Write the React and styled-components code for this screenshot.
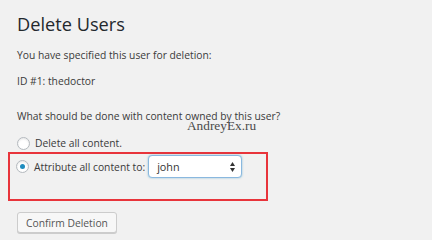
import React, { useState } from "react"
import styled, { createGlobalStyle } from "styled-components"

const GlobalStyle = createGlobalStyle`
    html, body {
        margin: 0;
        padding: 0;
        background: #f1f1f1;
    }
    body {
        font-family: "Open Sans", "Liberation Sans", sans-serif;
        color: #3a3a3a;
    }
`

const Page = styled.div`
    width: 432px;
    height: 240px;
    padding: 12px 0 0 17px;
    box-sizing: border-box;
    overflow: hidden;
`

const Title = styled.h1`
    margin: 0;
    font-size: 18.2px;
    font-weight: 400;
    line-height: 24px;
    color: #23282d;
`

const Text = styled.p`
    margin: ${ props => props.$top || 0 }px 0 0;
    font-size: 10.3px;
    line-height: 14px;
    color: #3a3a3a;
`

const Fieldset = styled.div`
    position: relative;
    margin-top: 21px;
`

const Watermark = styled.span`
    position: absolute;
    left: 170px;
    top: 10px;
    font-family: "Liberation Serif", "DejaVu Serif", serif;
    font-size: 13.3px;
    line-height: 14px;
    color: #4a4a4a;
`

const Row = styled.label`
    display: flex;
    align-items: center;
    gap: 5px;
    margin-top: ${ props => props.$top || 0 }px;
    height: ${ props => props.$height || 18 }px;
    font-size: 10.3px;
    line-height: 14px;
    color: #3a3a3a;
    white-space: nowrap;
`

const Highlight = styled.div`
    margin-left: -9px;
    width: 260px;
    height: 49px;
    box-sizing: border-box;
    border: 2px solid #e8343b;
    padding: 1px 0 0 6px;
`

const Radio = styled.span`
    width: 13px;
    height: 13px;
    box-sizing: border-box;
    border-radius: 50%;
    border: 1px solid #b4b9be;
    background: #fff;
    box-shadow: inset 0 1px 2px rgba(0, 0, 0, 0.1);
    display: flex;
    align-items: center;
    justify-content: center;
    flex-shrink: 0;

    &::after {
        content: "";
        width: 5px;
        height: 5px;
        border-radius: 50%;
        background: ${ props => props.$checked ? "#1e8cbe" : "transparent" };
    }
`

const Select = styled.div`
    margin-left: -2px;
    width: 94px;
    height: 23px;
    box-sizing: border-box;
    border: 1px solid #8ab8df;
    border-radius: 4px;
    box-shadow: 0 0 2px rgba(30, 140, 190, 0.5);
    background: #fff;
    display: flex;
    align-items: center;
    justify-content: space-between;
    padding: 0 6px 0 8px;
    font-size: 10.8px;
    color: #333;
`

const Arrows = styled.svg`
    width: 5px;
    height: 10px;
`

const Button = styled.button`
    display: block;
    margin-top: 11px;
    height: 21px;
    padding: 0 8px;
    font-family: "Open Sans", "Liberation Sans", sans-serif;
    font-size: 10.3px;
    color: #555;
    background: #f7f7f7;
    border: 1px solid #ccc;
    border-radius: 3px;
    box-shadow: 0 1px 0 #ccc;
`

export default function App() {
	const [choice, setChoice] = useState("reassign")

	return (
		<Page>
			<GlobalStyle/>
			<Title>Delete Users</Title>
			<Text $top={ 12 }>You have specified this user for deletion:</Text>
			<Text $top={ 12 }>ID #1: thedoctor</Text>
			<Fieldset>
				<Text>What should be done with content owned by this user?</Text>
				<Watermark>AndreyEx.ru</Watermark>
				<Row $top={ 11 } onClick={ () => setChoice("delete") }>
					<Radio $checked={ choice === "delete" }/>
					Delete all content.
				</Row>
				<Highlight>
					<Row $height={ 23 } onClick={ () => setChoice("reassign") }>
						<Radio $checked={ choice === "reassign" }/>
						Attribute all content to:
						<Select>
							john
							<Arrows viewBox="0 0 5 10">
								<path d="M2.5 0 L5 4 H0 Z" fill="#333"/>
								<path d="M2.5 10 L5 6 H0 Z" fill="#333"/>
							</Arrows>
						</Select>
					</Row>
				</Highlight>
			</Fieldset>
			<Button>Confirm Deletion</Button>
		</Page>
	)
}
